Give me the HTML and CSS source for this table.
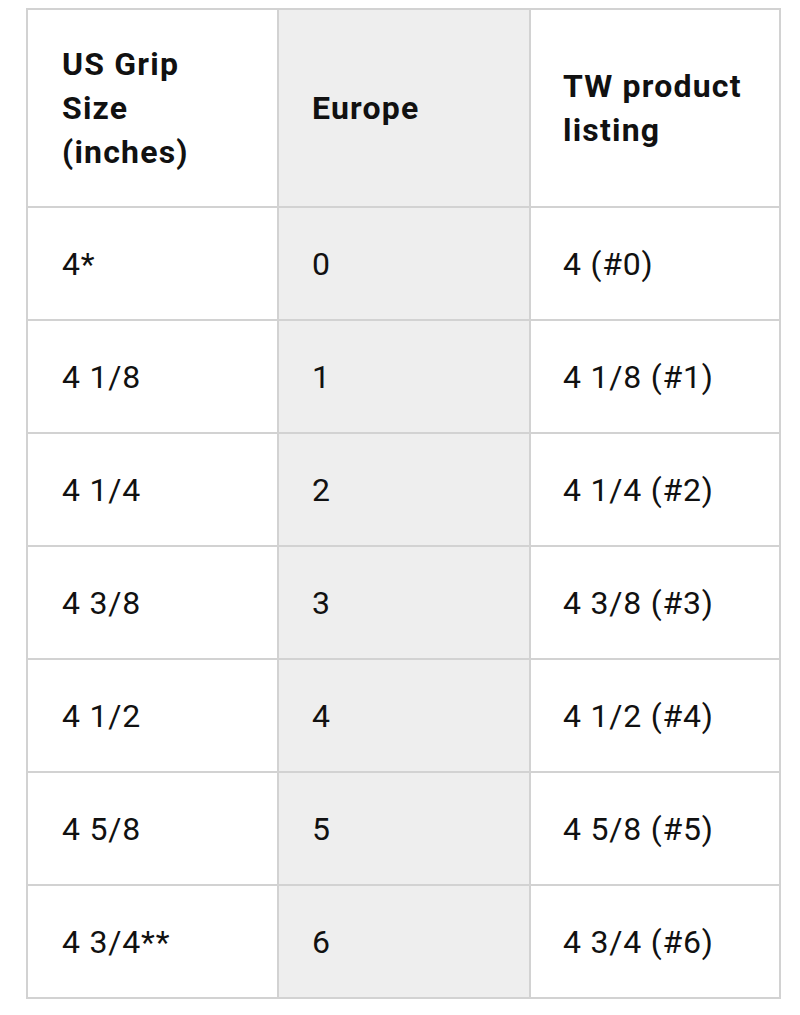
FILE: index.html
```html
<!DOCTYPE html>
<html>
<head>
<meta charset="utf-8">
<link rel="stylesheet" href="styles.css">
</head>
<body>
<table class="grip-table">
  <colgroup>
    <col class="col-a">
    <col class="col-b">
    <col class="col-c">
  </colgroup>
  <thead>
    <tr class="head-row">
      <th>US Grip<br>Size<br>(inches)</th>
      <th class="mid">Europe</th>
      <th>TW product<br>listing</th>
    </tr>
  </thead>
  <tbody>
    <tr><td>4*</td><td class="mid">0</td><td>4 (#0)</td></tr>
    <tr><td>4 1/8</td><td class="mid">1</td><td>4 1/8 (#1)</td></tr>
    <tr><td>4 1/4</td><td class="mid">2</td><td>4 1/4 (#2)</td></tr>
    <tr><td>4 3/8</td><td class="mid">3</td><td>4 3/8 (#3)</td></tr>
    <tr><td>4 1/2</td><td class="mid">4</td><td>4 1/2 (#4)</td></tr>
    <tr><td>4 5/8</td><td class="mid">5</td><td>4 5/8 (#5)</td></tr>
    <tr><td>4 3/4**</td><td class="mid">6</td><td>4 3/4 (#6)</td></tr>
  </tbody>
</table>
</body>
</html>
```

FILE: styles.css
```css
html, body {
  margin: 0;
  padding: 0;
  background: #ffffff;
}

body {
  padding: 8px 0 0 26px;
  font-family: Roboto, "Liberation Sans", sans-serif;
  color: #111111;
}

.grip-table {
  border-collapse: separate;
  border-spacing: 0;
  table-layout: fixed;
  width: 753px;
  border-top: 2px solid #d2d2d2;
  border-left: 2px solid #d2d2d2;
}

.col-a { width: 251px; }
.col-b { width: 252px; }
.col-c { width: 250px; }

.grip-table th,
.grip-table td {
  border-right: 2px solid #d2d2d2;
  border-bottom: 2px solid #d2d2d2;
  padding: 0 10px 0 34px;
  text-align: left;
  vertical-align: middle;
  font-size: 32px;
  line-height: 44px;
  white-space: nowrap;
}

.grip-table th {
  font-weight: 700;
  height: 196px;
  letter-spacing: 1.2px;
}

.grip-table td {
  font-weight: 400;
  height: 111px;
  letter-spacing: 0.8px;
}

.grip-table .mid {
  background: #eeeeee;
  padding-left: 33px;
}

.grip-table th:last-child,
.grip-table td:last-child {
  padding-left: 32px;
}
```
